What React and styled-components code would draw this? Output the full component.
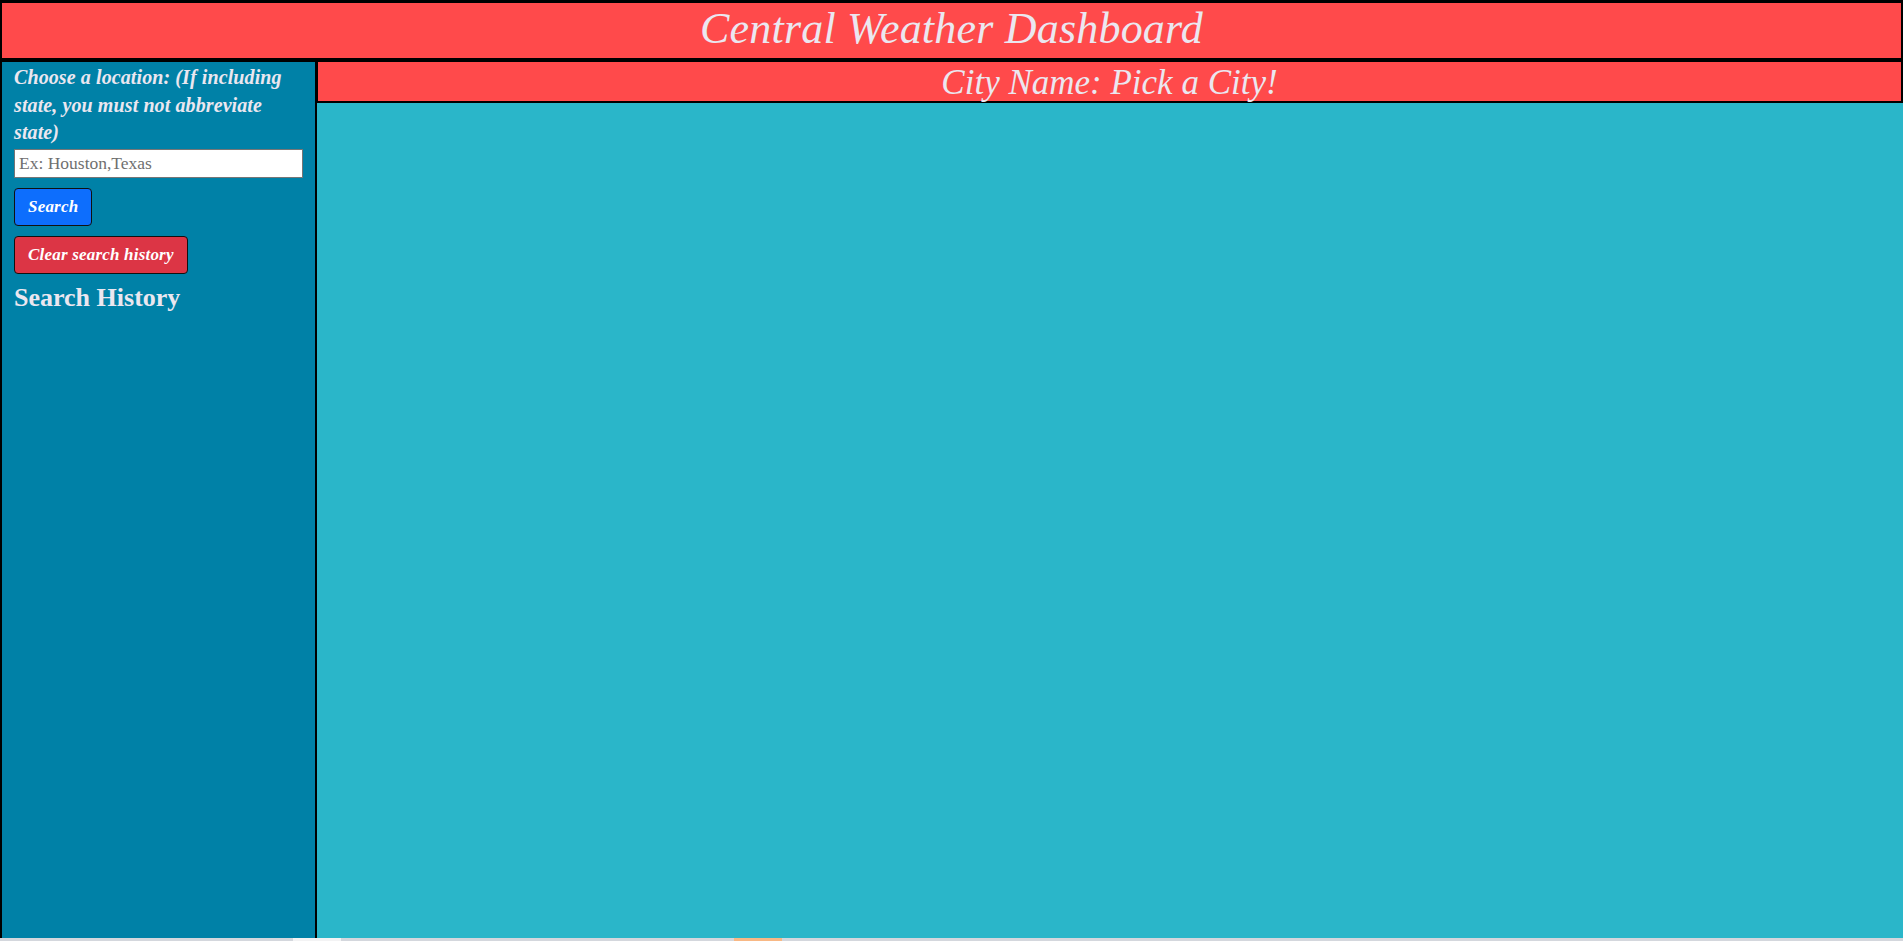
import React from 'react'
import styled, { createGlobalStyle } from 'styled-components'

const GlobalStyle = createGlobalStyle`
  html, body {
    margin: 0;
    padding: 0;
    height: 100%;
    overflow: hidden;
  }

  body {
    font-family: 'Liberation Serif', 'Times New Roman', serif;
    color: #ebe7f0;
  }

  * {
    box-sizing: border-box;
  }
`

const Page = styled.div`
  display: flex;
  flex-direction: column;
  height: 100vh;
`

const Header = styled.header`
  flex: 0 0 60px;
  display: flex;
  align-items: center;
  justify-content: center;
  background: #ff4a4b;
  border: 2px solid #000;
  border-top-width: 3px;
`

const Title = styled.h1`
  margin: 0;
  font-size: 44px;
  font-weight: 500;
  font-style: italic;
  letter-spacing: 0.2px;
  line-height: 1;
  padding-bottom: 4px;
`

const Body = styled.div`
  flex: 1;
  display: flex;
  min-height: 0;
`

const Sidebar = styled.aside`
  flex: 0 0 317px;
  background: #0081a7;
  border: 2px solid #000;
  border-bottom: none;
  padding: 2px 12px 0;
  display: flex;
  flex-direction: column;
  align-items: flex-start;
`

const Label = styled.label`
  font-size: 20px;
  font-weight: 700;
  font-style: italic;
  line-height: 27.5px;
  letter-spacing: 0.1px;
`

const Input = styled.input`
  margin-top: 2px;
  width: 289px;
  height: 29px;
  padding: 0 4px;
  border: 1px solid #767676;
  background: #fff;
  font-family: inherit;
  font-size: 17.5px;
  color: #333;

  &::placeholder {
    color: #6f6f6f;
  }
`

const Button = styled.button`
  margin-top: ${(p) => p.$gap}px;
  height: 38px;
  padding: 0 13px;
  border: 1px solid #111;
  border-radius: 4px;
  background: ${(p) => p.$color};
  color: #fff;
  font-family: inherit;
  font-size: 17px;
  font-weight: 700;
  font-style: italic;
  letter-spacing: 0.2px;
  cursor: pointer;
`

const HistoryTitle = styled.h3`
  margin: 7px 0 0;
  font-size: 26px;
  font-weight: 600;
  line-height: 33px;
`

const Main = styled.main`
  flex: 1;
  background: #2ab6c9;
`

const CityBar = styled.div`
  height: 43px;
  display: flex;
  align-items: center;
  justify-content: center;
  background: #ff4a4b;
  border: 2px solid #000;
  border-left-width: 1.5px;
`

const CityName = styled.h2`
  margin: 0;
  font-size: 35px;
  font-weight: 500;
  font-style: italic;
  line-height: 1;
  padding-top: 2px;
`

const Strip = styled.div`
  flex: 0 0 3px;
  display: flex;
  background: #d4d7dd;
`

const Segment = styled.div`
  flex: 0 0 ${(p) => p.$width}px;
  background: ${(p) => p.$color || 'transparent'};
`

const App = () => (
  <Page>
    <GlobalStyle />
    <Header>
      <Title>Central Weather Dashboard</Title>
    </Header>
    <Body>
      <Sidebar>
        <Label htmlFor="city">
          Choose a location: (If including state, you must not abbreviate
          state)
        </Label>
        <Input id="city" type="text" placeholder="Ex: Houston,Texas" />
        <Button $color="#0d6efd" $gap={10}>
          Search
        </Button>
        <Button $color="#dc3545" $gap={10}>
          Clear search history
        </Button>
        <HistoryTitle>Search History</HistoryTitle>
      </Sidebar>
      <Main>
        <CityBar>
          <CityName>City Name: Pick a City!</CityName>
        </CityBar>
      </Main>
    </Body>
    <Strip>
      <Segment $width={293} />
      <Segment $width={48} $color="#f3f3f4" />
      <Segment $width={393} />
      <Segment $width={48} $color="#f8b885" />
    </Strip>
  </Page>
)

export default App
